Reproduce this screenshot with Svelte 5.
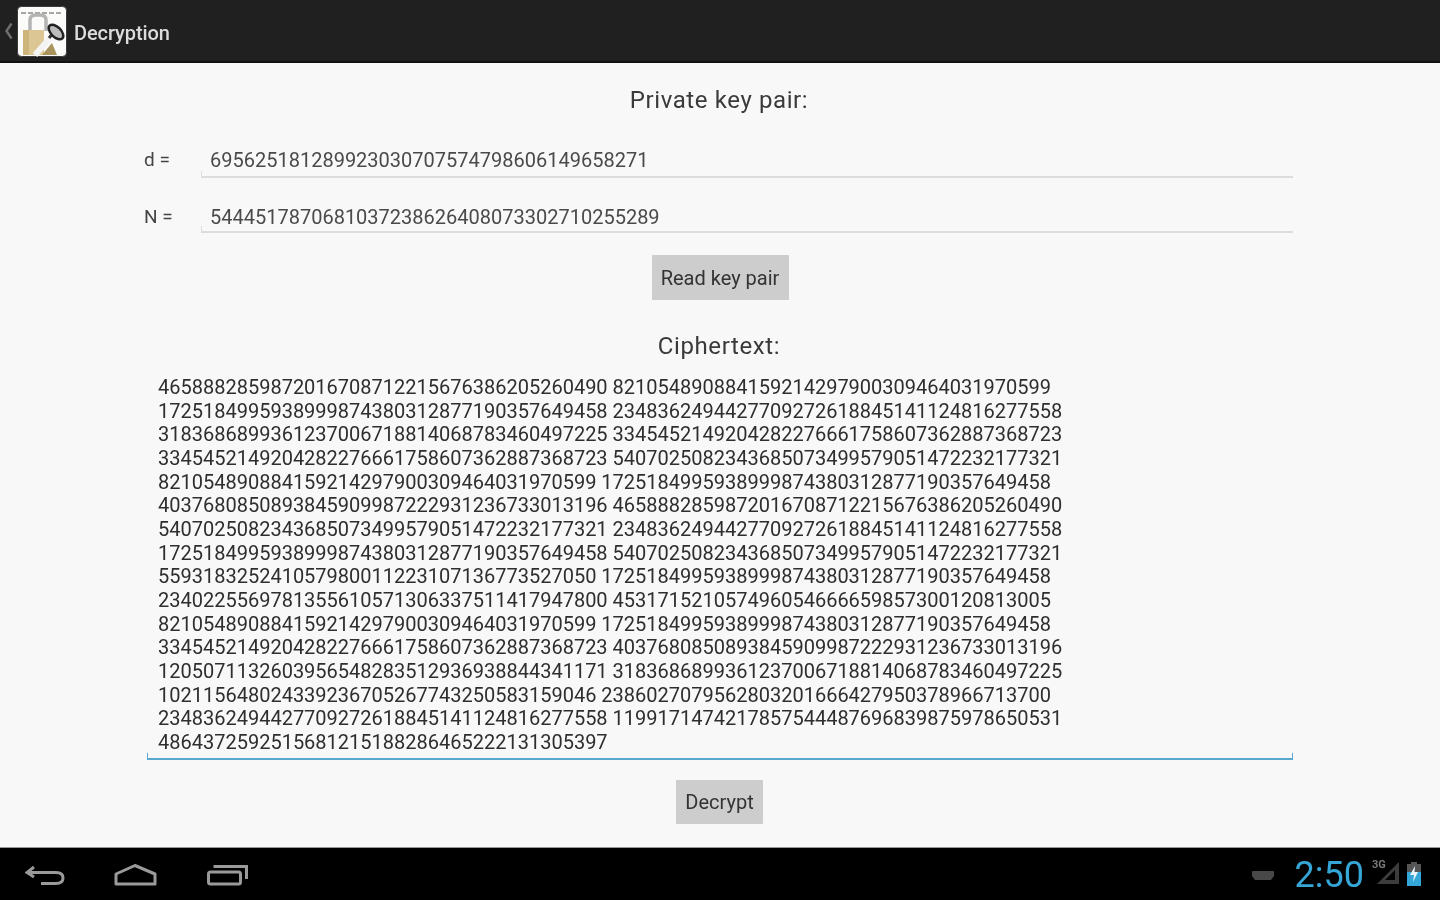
<script>
  const cipherLines = [
    "4658882859872016708712215676386205260490 821054890884159214297900309464031970599",
    "1725184995938999874380312877190357649458 2348362494427709272618845141124816277558",
    "3183686899361237006718814068783460497225 3345452149204282276661758607362887368723",
    "3345452149204282276661758607362887368723 5407025082343685073499579051472232177321",
    "821054890884159214297900309464031970599 1725184995938999874380312877190357649458",
    "4037680850893845909987222931236733013196 4658882859872016708712215676386205260490",
    "5407025082343685073499579051472232177321 2348362494427709272618845141124816277558",
    "1725184995938999874380312877190357649458 5407025082343685073499579051472232177321",
    "559318325241057980011223107136773527050 1725184995938999874380312877190357649458",
    "2340225569781355610571306337511417947800 453171521057496054666659857300120813005",
    "821054890884159214297900309464031970599 1725184995938999874380312877190357649458",
    "3345452149204282276661758607362887368723 4037680850893845909987222931236733013196",
    "1205071132603956548283512936938844341171 3183686899361237006718814068783460497225",
    "102115648024339236705267743250583159046 2386027079562803201666427950378966713700",
    "2348362494427709272618845141124816277558 1199171474217857544487696839875978650531",
    "4864372592515681215188286465222131305397"
  ];
</script>

<div class="screen">
  <header class="actionbar">
    <svg class="back" viewBox="0 0 8 20" width="8" height="20">
      <path d="M6.5 2.5 L1.5 10 L6.5 17.5" fill="none" stroke="#6f6f6f" stroke-width="2.4" />
    </svg>
    <svg class="logo" viewBox="0 0 50 51" width="50" height="51">
      <rect x="0.5" y="0.5" width="49" height="50" rx="4" fill="#fbfbfa" stroke="#3a3a3a" />
      <path d="M4 7 H45" stroke="#8a8a8a" stroke-width="1.5" stroke-dasharray="5 2" />
      <path d="M13 25 V14 Q13 9 19 9 H23 Q29 9 29 14 V25" fill="none" stroke="#b4b4b4" stroke-width="3.5" />
      <rect x="6" y="24" width="21" height="25" fill="#dcc794" />
      <rect x="6" y="24" width="6" height="25" fill="#cdb47a" />
      <path d="M25 49 L35 37 L40 49 Z" fill="#a8945c" />
      <path d="M18 49 L33 32" stroke="#f4f4f4" stroke-width="6" />
      <path d="M32 32 L37 26" stroke="#333" stroke-width="3" />
      <ellipse cx="39" cy="26" rx="9" ry="5" transform="rotate(45 39 26)" fill="#bbb" stroke="#222" stroke-width="2.5" />
    </svg>
    <span class="apptitle">Decryption</span>
  </header>

  <main class="content">
    <h2 class="heading first">Private key pair:</h2>

    <div class="row d">
      <span class="label">d =</span>
      <div class="field"><span class="soft">695625181289923030707574798606149658271</span></div>
    </div>
    <div class="row n">
      <span class="label">N =</span>
      <div class="field"><span class="soft">5444517870681037238626408073302710255289</span></div>
    </div>

    <button class="btn read"><span class="soft">Read key pair</span></button>

    <h2 class="heading second">Ciphertext:</h2>

    <div class="cipher">
      {#each cipherLines as line}
        <div class="line">{line}</div>
      {/each}
    </div>

    <button class="btn decrypt"><span class="soft">Decrypt</span></button>
  </main>

  <footer class="navbar">
    <div class="navicons">
      <svg viewBox="0 0 40 22" width="40" height="22">
        <path d="M9 3 L2 8.5 L9 13 M3 8.5 H31 Q38 8.5 38 14 Q38 19.5 31 19.5 H16" fill="none" stroke="#9a9a9a" stroke-width="3" />
      </svg>
      <svg viewBox="0 0 44 22" width="44" height="22">
        <path d="M2 10 L21 1.5 L41 10 V20 H2 Z" fill="none" stroke="#9a9a9a" stroke-width="3" stroke-linejoin="round" />
      </svg>
      <svg viewBox="0 0 42 22" width="42" height="22">
        <rect x="1.5" y="8" width="32" height="12" rx="2" fill="none" stroke="#9a9a9a" stroke-width="3" />
        <path d="M8 4 V2.5 H39.5 V15" fill="none" stroke="#9a9a9a" stroke-width="3" />
      </svg>
    </div>
    <div class="status">
      <svg class="kbd" viewBox="0 0 24 12" width="24" height="12">
        <path d="M1 2 Q1 1 2 1 H22 Q23 1 23 2 V6 L20 10 H4 L1 6 Z" fill="#484848" />
      </svg>
      <span class="clock">2:50</span>
      <div class="signal">
        <span class="net">3G</span>
        <svg viewBox="0 0 26 26" width="26" height="26">
          <path d="M24 2 V24 H2 Z M20 10 L10 20 H20 Z" fill="#3c3c3c" fill-rule="evenodd" />
        </svg>
      </div>
      <svg class="battery" viewBox="0 0 16 26" width="16" height="26">
        <rect x="5" y="1" width="6" height="3" fill="#555" />
        <rect x="1" y="3" width="14" height="8" fill="#555" />
        <rect x="1" y="11" width="14" height="14" fill="#33a5d6" />
        <path d="M9 5 L4 14 H8 L7 21 L12 11 H8.5 Z" fill="#e6f4fa" />
      </svg>
    </div>
  </footer>
</div>

<style>
  :global(body) {
    margin: 0;
    background: #f8f8f8;
  }

  .screen {
    width: 1440px;
    height: 900px;
    display: flex;
    flex-direction: column;
    overflow: hidden;
    font-family: Roboto, "Liberation Sans", sans-serif;
    color: #3c3c3c;
  }

  .actionbar {
    height: 63px;
    flex: none;
    box-sizing: border-box;
    background: #202020;
    border-bottom: 2px solid #111;
    box-shadow: 0 1px 2px rgba(0, 0, 0, 0.25);
    display: flex;
    align-items: center;
    padding-left: 5px;
    padding-top: 1px;
  }

  .back {
    margin-right: 4px;
  }

  .logo {
    filter: blur(0.6px);
  }

  .apptitle {
    margin-left: 7px;
    margin-top: 3px;
    color: #dcdcdc;
    font-size: 20px;
    font-weight: 500;
    letter-spacing: -0.1px;
    filter: blur(0.7px);
  }

  .content {
    flex: 1;
    min-height: 0;
    background: #f8f8f8;
    display: flex;
    flex-direction: column;
    padding: 0 147px;
  }

  .heading {
    margin: 0;
    font-weight: 400;
    font-size: 24px;
    line-height: 30px;
    text-align: center;
    letter-spacing: 0.6px;
    color: #3a3a3a;
    filter: blur(0.7px);
    margin-right: 2px;
  }

  .heading.first {
    margin-top: 22px;
  }

  .heading.second {
    margin-top: 31px;
  }

  .row {
    display: grid;
    grid-template-columns: 57px 1fr;
    margin-left: -3px;
    align-items: start;
  }

  .row.d {
    margin-top: 28px;
  }

  .row.n {
    margin-top: 22px;
  }

  .row.n .field {
    padding-bottom: 2px;
  }

  .label {
    font-size: 19px;
    line-height: 24px;
    padding-top: 5px;
    color: #444;
    filter: blur(0.7px);
  }

  .field {
    position: relative;
    font-size: 20px;
    line-height: 24px;
    padding: 5px 9px 4px;
    border-bottom: 2px solid #dcdcdc;
    color: #4a4a4a;
  }

  .field::before,
  .cipher::before,
  .cipher::after {
    content: "";
    position: absolute;
    left: 0;
    bottom: 0;
    width: 1px;
    height: 5px;
    background: #dcdcdc;
  }

  .cipher::before,
  .cipher::after {
    background: #58a8cf;
  }

  .cipher::after {
    left: auto;
    right: 0;
  }

  .soft,
  .line {
    filter: blur(0.7px);
  }

  .soft {
    display: inline-block;
  }

  .btn {
    align-self: center;
    border: none;
    border-radius: 1px;
    background: #cdcdcd;
    color: #333;
    font: inherit;
    font-size: 20px;
    padding: 0;
    height: 45px;
  }

  .btn.read {
    width: 137px;
    margin-top: 22px;
  }

  .btn.decrypt {
    width: 87px;
    height: 44px;
    margin-top: 20px;
    margin-right: 1px;
  }

  .cipher {
    position: relative;
    margin-top: 15px;
    padding: 0 11px 3px;
    border-bottom: 2px solid #58a8cf;
    font-size: 20px;
    line-height: 23.67px;
    color: #2e2e2e;
  }

  .line {
    white-space: pre;
  }

  .navbar {
    height: 53px;
    flex: none;
    box-sizing: border-box;
    background: #000;
    border-top: 1px solid #999;
    display: flex;
    justify-content: space-between;
    align-items: center;
    padding: 2px 18px 0 25px;
  }

  .navicons {
    display: flex;
    align-items: center;
    gap: 49px;
    filter: blur(0.6px);
  }

  .status {
    display: flex;
    align-items: center;
  }

  .kbd {
    filter: blur(0.6px);
    margin-top: 2px;
  }

  .clock {
    color: #35a6d6;
    font-size: 36px;
    font-weight: 400;
    margin: 0 11px 0 20px;
    filter: blur(0.6px);
  }

  .signal {
    position: relative;
    display: flex;
    margin-right: 5px;
    margin-top: -4px;
    filter: blur(0.5px);
  }

  .net {
    position: absolute;
    left: -3px;
    top: -2px;
    font-size: 11px;
    font-weight: 700;
    color: #777;
  }

  .battery {
    filter: blur(0.5px);
    margin-top: -2px;
  }
</style>
